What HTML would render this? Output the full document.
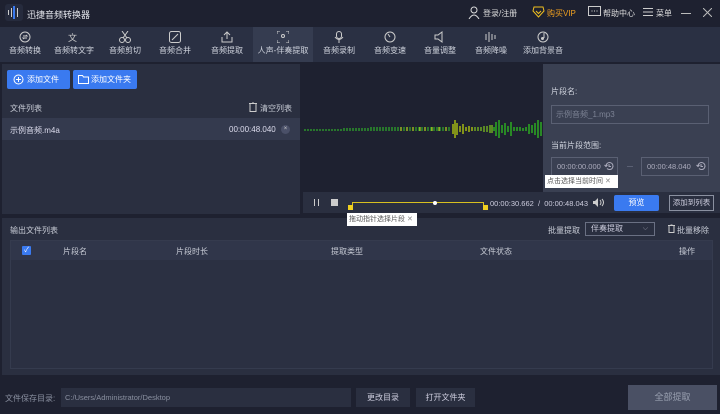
<!DOCTYPE html>
<html><head><meta charset="utf-8"><style>
*{margin:0;padding:0;box-sizing:border-box}
body{width:720px;height:414px;background:#1e2130;font-family:"Liberation Sans","Noto Sans CJK SC",sans-serif;font-size:8px;color:#d0d4de;position:relative;overflow:hidden}
.a{position:absolute}
.nav{left:0;top:27px;width:720px;height:35px;background:#2a3043}
.ni{position:absolute;top:0;height:35px;width:50px;text-align:center;font-size:8px;color:#d0d4de}
.ni svg{display:block;margin:4px auto 2px}
.btn{background:#3a7af0;color:#fff;border-radius:2px;height:19px;line-height:19px;font-size:8px}
</style></head><body>
<!-- title -->
<div class="a" style="left:5px;top:4px;width:18px;height:17px;background:#262b3d;border-radius:3px"></div>
<div class="a" style="left:8px;top:10px;width:1px;height:5px;background:#ccc"></div>
<div class="a" style="left:11px;top:8px;width:1px;height:9px;background:#ccc"></div>
<div class="a" style="left:13px;top:6px;width:2px;height:13px;background:#3a7af0"></div>
<div class="a" style="left:17px;top:8px;width:1px;height:9px;background:#ccc"></div>
<div class="a" style="left:27px;top:8px;font-size:9px;color:#e6e8ee">迅捷音频转换器</div>
<svg class="a" style="left:468px;top:6px" width="12" height="13"><circle cx="6" cy="4" r="3" fill="none" stroke="#ddd"/><path d="M1 13 Q6 5 11 13" fill="none" stroke="#ddd"/></svg>
<div class="a" style="left:483px;top:8px;color:#ddd">登录/注册</div>
<svg class="a" style="left:532px;top:6px" width="13" height="12"><path d="M2 1h9l1 4-5.5 6L1 5z" fill="none" stroke="#f0c020"/><path d="M4 5l2.5 2.5L9 5" fill="none" stroke="#f0c020"/></svg>
<div class="a" style="left:547px;top:8px;color:#f0a020">购买VIP</div>
<svg class="a" style="left:588px;top:6px" width="13" height="12"><rect x="0.5" y="0.5" width="12" height="9" fill="none" stroke="#ccc"/><circle cx="4" cy="5" r=".6" fill="#ccc"/><circle cx="6.5" cy="5" r=".6" fill="#ccc"/><circle cx="9" cy="5" r=".6" fill="#ccc"/></svg>
<div class="a" style="left:603px;top:8px;color:#ddd">帮助中心</div>
<svg class="a" style="left:643px;top:7px" width="10" height="10"><path d="M0 1.5h10M0 5h10M0 8.5h10" stroke="#ccc"/></svg>
<div class="a" style="left:656px;top:8px;color:#ddd">菜单</div>
<div class="a" style="left:681px;top:13px;width:10px;height:1px;background:#bbb"></div>
<svg class="a" style="left:703px;top:8px" width="9" height="9"><path d="M0 0L9 9M9 0L0 9" stroke="#bbb"/></svg>
<!-- nav -->
<div class="a nav">
<div class="ni" style="left:0"><svg width="12" height="12"><circle cx="6" cy="6" r="5" fill="none" stroke="#ccc"/><path d="M4 5h4l-1-1M8 7H4l1 1" stroke="#ccc" fill="none"/></svg>音频转换</div>
<div class="ni" style="left:49px"><svg width="12" height="12"><text x="0" y="10" fill="#ccc" font-size="9">文</text></svg>音频转文字</div>
<div class="ni" style="left:100px"><svg width="12" height="12"><circle cx="3" cy="9" r="2.5" fill="none" stroke="#ccc"/><circle cx="9" cy="9" r="2.5" fill="none" stroke="#ccc"/><path d="M4 7L9 0M8 7L3 0" stroke="#ccc"/></svg>音频剪切</div>
<div class="ni" style="left:150px"><svg width="12" height="12"><rect x=".5" y=".5" width="11" height="11" rx="2" fill="none" stroke="#ccc"/><path d="M3 9l6-6" stroke="#ccc"/></svg>音频合并</div>
<div class="ni" style="left:202px"><svg width="12" height="12"><path d="M1 6v5h10V6M6 8V1M3 4l3-3 3 3" fill="none" stroke="#ccc"/></svg>音频提取</div>
<div class="ni" style="left:253px;width:60px;background:#353c50"><svg width="12" height="12"><path d="M0 3V0h3M9 0h3v3M12 9v3H9M3 12H0V9" fill="none" stroke="#ccc"/><circle cx="6" cy="5" r="1.5" fill="none" stroke="#ccc"/></svg>人声-伴奏提取</div>
<div class="ni" style="left:314px"><svg width="12" height="12"><rect x="3.5" y=".5" width="5" height="7" rx="2.5" fill="none" stroke="#ccc"/><path d="M2 6q4 5 8 0M6 9v3" fill="none" stroke="#ccc"/></svg>音频录制</div>
<div class="ni" style="left:365px"><svg width="12" height="12"><circle cx="6" cy="6" r="5" fill="none" stroke="#ccc"/><path d="M6 6L4 3" stroke="#ccc"/></svg>音频变速</div>
<div class="ni" style="left:415px"><svg width="12" height="12"><path d="M1 4h3l4-3v10L4 8H1z" fill="none" stroke="#ccc"/></svg>音量调整</div>
<div class="ni" style="left:466px"><svg width="12" height="12"><path d="M1 3v6M4 1v10M7 3v6M10 4v4" stroke="#ccc"/></svg>音频降噪</div>
<div class="ni" style="left:518px"><svg width="12" height="12"><circle cx="6" cy="6" r="5" fill="none" stroke="#ccc"/><path d="M7 2v5" stroke="#ccc"/><circle cx="5.5" cy="7.5" r="1.5" fill="#ccc"/></svg>添加背景音</div>
</div>
<!-- left panel -->
<div class="a" style="left:2px;top:64px;width:298px;height:150px;background:#2a2f40"></div>
<div class="a btn" style="left:7px;top:70px;width:63px;padding-left:20px">添加文件</div>
<svg class="a" style="left:13px;top:74px" width="11" height="11"><circle cx="5.5" cy="5.5" r="4.5" fill="none" stroke="#fff"/><path d="M5.5 3v5M3 5.5h5" stroke="#fff"/></svg>
<div class="a btn" style="left:73px;top:70px;width:64px;padding-left:18px">添加文件夹</div>
<svg class="a" style="left:78px;top:74px" width="11" height="10"><path d="M.5 1.5h4l1 1.5h5v6.5H.5z" fill="none" stroke="#fff"/></svg>
<div class="a" style="left:10px;top:103px;color:#c8ccd6">文件列表</div>
<svg class="a" style="left:249px;top:102px" width="8" height="10"><path d="M0 1.5h8M3 0h2M1 2v7.5h6V2" fill="none" stroke="#ccc"/></svg>
<div class="a" style="left:260px;top:103px;color:#c8ccd6">清空列表</div>
<div class="a" style="left:2px;top:118px;width:298px;height:22px;background:#343a4e"></div>
<div class="a" style="left:10px;top:125px;color:#dde">示例音频.m4a</div>
<div class="a" style="left:229px;top:125px;color:#dde">00:00:48.040</div>
<div class="a" style="left:281px;top:125px;width:9px;height:9px;border-radius:50%;background:#4a5068;color:#ccc;font-size:6px;text-align:center;line-height:9px">×</div>
<!-- waveform -->
<svg class="a" style="left:303px;top:64px" width="240" height="128">
<g id="w">
<path d="M2 65v2M5 65v2M8 65v2M11 65v2M14 65v2M17 65v2M20 65v2M23 65v2M26 65v2M29 65v2M32 65v2M35 65v2M38 65v2M41 64v3M44 64v3M47 64v3M50 64v3M53 64v3M56 64v3M59 64v3M62 64v3M65 64v3M68 63v4M71 63v4M74 63v4M77 63v4M80 63v4M83 63v4M86 63v4M89 63v4M92 63v4M95 63v4M98 63v4M101 63v4M104 63v4M107 63v4M110 63v4M113 63v4M116 63v4M119 63v4M122 63v4M125 63v4M128 63v4M131 63v4M134 63v4M137 63v4M140 63v4M143 63v4M146 63v4" stroke="#2fae2a" stroke-width="1.2"/>
<path d="M98 63v4M104 63v4M110 63v4M117 63v4M122 63v4M129 63v4M136 63v4M143 63v4" stroke="#b8c420" stroke-width="1.2"/>
<path d="M150 60v10M152 56v18M154 59v12M157 62v6M160 60v10M163 63v4M166 62v6M169 63v4" stroke="#b8d010" stroke-width="1.3"/>
<path d="M172 63v4M175 63v4M178 63v4M181 62v6M184 62v6M187 61v8M189 61v8" stroke="#7cc020" stroke-width="1.3"/>
<path d="M191 63v4M193 58v14M196 56v18M199 61v8M202 59v12M205 62v6M208 58v14M211 63v4M214 63v4M217 63v4M220 64v3M223 63v4M226 60v10M229 61v8M232 59v12M235 56v18M238 58v14" stroke="#2fc020" stroke-width="1.3"/>
</g>
</svg>
<!-- right panel -->
<div class="a" style="left:543px;top:64px;width:177px;height:128px;background:#3a4052"></div>
<div class="a" style="left:551px;top:86px;color:#d0d4de">片段名:</div>
<div class="a" style="left:551px;top:105px;width:158px;height:19px;border:1px solid #5a6073;color:#7c8294;padding-left:4px;line-height:17px">示例音频_1.mp3</div>
<div class="a" style="left:551px;top:140px;color:#d0d4de">当前片段范围:</div>
<div class="a" style="left:551px;top:157px;width:67px;height:19px;border:1px solid #5a6073;color:#aab;padding-left:5px;line-height:17px;font-size:7.5px">00:00:00.000</div>
<div class="a" style="left:641px;top:157px;width:68px;height:19px;border:1px solid #5a6073;color:#aab;padding-left:5px;line-height:17px;font-size:7.5px">00:00:48.040</div>
<svg class="a" style="left:604px;top:161px" width="10" height="10"><path d="M2 5a3.5 3.5 0 1 1 1 2.5M5 3v2.5h2M0.5 4l1.5 1.5L3.5 4" fill="none" stroke="#aab"/></svg>
<svg class="a" style="left:696px;top:161px" width="10" height="10"><path d="M2 5a3.5 3.5 0 1 1 1 2.5M5 3v2.5h2M0.5 4l1.5 1.5L3.5 4" fill="none" stroke="#aab"/></svg>
<div class="a" style="left:627px;top:166px;width:6px;height:1px;background:#5a6073"></div>
<div class="a" style="left:545px;top:175px;width:73px;height:13px;background:#fff;color:#555;font-size:7px;line-height:13px;padding-left:2px">点击选择当前时间 <span style="color:#888">✕</span></div>
<!-- controls -->
<div class="a" style="left:303px;top:192px;width:417px;height:21px;background:#2a2f40"></div>
<div class="a" style="left:314px;top:199px;width:1px;height:7px;background:#ccc"></div>
<div class="a" style="left:318px;top:199px;width:1px;height:7px;background:#ccc"></div>
<div class="a" style="left:331px;top:199px;width:7px;height:7px;background:#ccc"></div>
<div class="a" style="left:352px;top:202px;width:132px;height:1px;background:#d8c020"></div>
<div class="a" style="left:352px;top:202px;width:1px;height:5px;background:#d8c020"></div>
<div class="a" style="left:483px;top:202px;width:1px;height:5px;background:#d8c020"></div>
<div class="a" style="left:348px;top:205px;width:5px;height:5px;background:#f0d020"></div>
<div class="a" style="left:483px;top:205px;width:5px;height:5px;background:#f0d020"></div>
<div class="a" style="left:433px;top:201px;width:4px;height:4px;border-radius:50%;background:#fff"></div>
<div class="a" style="left:490px;top:199px;color:#ccd;font-size:7.5px">00:00:30.662 &nbsp;/ &nbsp;00:00:48.043</div>
<svg class="a" style="left:593px;top:198px" width="11" height="9"><path d="M0 3h2l3-3v9L2 6H0z" fill="#ccc"/><path d="M7 2q2 2.5 0 5M9 1q3 3.5 0 7" fill="none" stroke="#ccc"/></svg>
<div class="a btn" style="left:614px;top:195px;width:45px;height:16px;line-height:16px;text-align:center">预览</div>
<div class="a" style="left:669px;top:195px;width:45px;height:16px;border:1px solid #8a90a0;color:#ccd;text-align:center;line-height:14px;font-size:7.5px">添加到列表</div>
<div class="a" style="left:347px;top:213px;width:70px;height:13px;background:#fff;color:#555;font-size:7px;line-height:13px;padding-left:2px;z-index:2">拖动指针选择片段 <span style="color:#888">✕</span></div>
<!-- bottom panel -->
<div class="a" style="left:2px;top:218px;width:718px;height:157px;background:#2a2f40"></div>
<div class="a" style="left:10px;top:225px;color:#c8ccd6">输出文件列表</div>
<div class="a" style="left:548px;top:225px;color:#c8ccd6">批量提取</div>
<div class="a" style="left:585px;top:222px;width:70px;height:14px;border:1px solid #6a7083;color:#ccd;padding-left:5px;line-height:12px">伴奏提取<span style="position:absolute;right:6px;color:#99a;font-size:7px">⌵</span></div>
<svg class="a" style="left:668px;top:224px" width="7" height="9"><path d="M0 1.5h7M2.5 0h2M1 2v6.5h5V2" fill="none" stroke="#ccc"/></svg>
<div class="a" style="left:677px;top:225px;color:#c8ccd6">批量移除</div>
<div class="a" style="left:10px;top:240px;width:703px;height:129px;background:#2b3042;border:1px solid #353b4e"></div>
<div class="a" style="left:11px;top:241px;width:701px;height:19px;background:#30364a"></div>
<div class="a" style="left:22px;top:246px;width:9px;height:9px;background:#3a7af0;border-radius:1px;color:#fff;font-size:7px;line-height:9px;text-align:center">✓</div>
<div class="a" style="left:63px;top:246px;color:#c8ccd6">片段名</div>
<div class="a" style="left:176px;top:246px;color:#c8ccd6">片段时长</div>
<div class="a" style="left:331px;top:246px;color:#c8ccd6">提取类型</div>
<div class="a" style="left:480px;top:246px;color:#c8ccd6">文件状态</div>
<div class="a" style="left:679px;top:246px;color:#c8ccd6">操作</div>
<!-- footer -->
<div class="a" style="left:5px;top:393px;color:#8a90a0">文件保存目录:</div>
<div class="a" style="left:61px;top:388px;width:290px;height:19px;background:#2a2f40;color:#8a90a0;padding-left:4px;line-height:19px;font-size:7.5px">C:/Users/Administrator/Desktop</div>
<div class="a" style="left:356px;top:388px;width:54px;height:19px;background:#2a2f40;color:#ccd;text-align:center;line-height:19px">更改目录</div>
<div class="a" style="left:416px;top:388px;width:59px;height:19px;background:#2a2f40;color:#ccd;text-align:center;line-height:19px">打开文件夹</div>
<div class="a" style="left:628px;top:385px;width:89px;height:25px;background:#4a5064;color:#99a0b0;text-align:center;line-height:25px;font-size:9px">全部提取</div>
</body></html>
